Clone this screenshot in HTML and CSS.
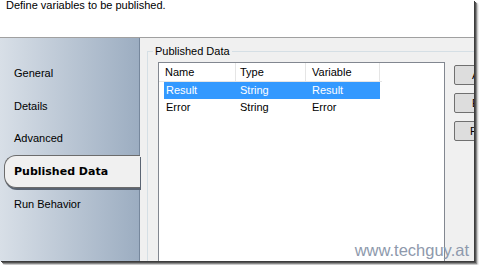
FILE: index.html
```html
<!DOCTYPE html>
<html lang="en">
<head>
  <meta charset="UTF-8" />
  <title>Published Data</title>
  <link rel="stylesheet" href="styles.css">
</head>
<body>
  <div class="frame">
    <div class="header">Define variables to be published.</div>
    <div class="main">
      <div class="sidebar">
        <div class="nav-item">General</div>
        <div class="nav-item">Details</div>
        <div class="nav-item">Advanced</div>
        <div class="nav-item active">Published Data</div>
        <div class="nav-item">Run Behavior</div>
      </div>
      <div class="content">
        <fieldset class="group">
          <legend>Published Data</legend>
          <div class="group-body">
            <div class="listview">
              <div class="lv-header">
                <div class="hcell c1">Name</div>
                <div class="hcell c2">Type</div>
                <div class="hcell c3">Variable</div>
              </div>
              <div class="lv-row selected">
                <div class="cell c1">Result</div>
                <div class="cell c2">String</div>
                <div class="cell c3">Result</div>
              </div>
              <div class="lv-row">
                <div class="cell c1">Error</div>
                <div class="cell c2">String</div>
                <div class="cell c3">Error</div>
              </div>
            </div>
            <div class="buttons">
              <button class="btn">Add...</button>
              <button class="btn">Edit...</button>
              <button class="btn wide">Remove</button>
            </div>
          </div>
        </fieldset>
      </div>
    </div>
    <div class="watermark">www.techguy.at</div>
  </div>
</body>
</html>
```

FILE: styles.css
```css
body {
  margin: 0;
  width: 479px;
  height: 265px;
  overflow: hidden;
  background: #fff;
  font-family: "Liberation Sans", Arial, sans-serif;
  font-size: 11px;
  color: #000;
}
.frame {
  position: relative;
  width: 474px;
  height: 261px;
  display: flex;
  flex-direction: column;
  overflow: hidden;
  box-shadow: 1px 1px 0 #3c3c3c, 2px 2px 0 #555, 3px 3px 1px #8a8a8a, 4px 4px 2px #c4c4c4;
}
.header {
  height: 37px;
  background: #fff;
  border-bottom: 1px solid #a0a0a0;
  padding: 0 6px;
  line-height: 11px;
}
.main {
  flex: 1;
  display: flex;
  min-height: 0;
}
.sidebar {
  width: 140px;
  flex-shrink: 0;
  box-sizing: border-box;
  background: linear-gradient(to right, #d8dfe7, #9cadc1);
  border-right: 1px solid #76879c;
  padding-top: 19px;
}
.nav-item {
  height: 32.5px;
  line-height: 32px;
  padding-left: 14px;
}
.nav-item.active {
  margin-left: 4px;
  margin-right: -1px;
  height: 31px;
  line-height: 31px;
  padding-left: 9px;
  background: #f0f0f0;
  border: 1px solid #6c6c6c;
  border-right: none;
  border-radius: 12px 0 0 12px;
  font-family: "DejaVu Sans", sans-serif;
  font-weight: bold;
  box-shadow: 1px 2px 0 #5a6472;
  position: relative;
}
.content {
  flex: 1;
  background: #f0f0f0;
  padding: 7px 0 0 7px;
  min-width: 0;
}
.group {
  margin: 0;
  padding: 0 0 0 10px;
  border: 1px solid #d5dfe5;
  border-right: none;
  border-bottom: none;
  height: 100%;
  box-sizing: border-box;
}
.group legend {
  padding: 0 2px;
  margin-left: -5px;
  line-height: 12px;
}
.group-body {
  display: flex;
  gap: 9px;
  padding-top: 5px;
  height: 100%;
}
.listview {
  width: 285px;
  flex-shrink: 0;
  background: #fff;
  border: 1px solid #828790;
  height: 220px;
}
.lv-header {
  display: flex;
  height: 18px;
  border-bottom: 1px solid #e5e5e5;
  margin-right: 62px;
}
.hcell {
  line-height: 18px;
  border-right: 1px solid #e5e5e5;
  padding-left: 6px;
  box-sizing: border-box;
}
.hcell.c1 { width: 77px; }
.hcell.c2 { width: 70px; padding-left: 4px; }
.hcell.c3 { width: 74px; }
.lv-row {
  display: flex;
  height: 17px;
  line-height: 17px;
  margin-left: 5px;
  width: 216px;
}
.lv-row.selected {
  background: #3399ff;
  color: #fff;
}
.cell {
  padding-left: 2px;
  box-sizing: border-box;
}
.cell.c1 { width: 72px; }
.cell.c2 { width: 70px; padding-left: 4px; }
.cell.c3 { width: 74px; padding-left: 6px; }
.buttons {
  display: flex;
  flex-direction: column;
  gap: 8px;
  padding-top: 3px;
}
.btn {
  width: 75px;
  height: 20px;
  background: #dddddd;
  border: 1px solid #707070;
  border-radius: 2px;
  font-family: inherit;
  font-size: 11px;
  text-align: left;
  padding: 0 0 0 17px;
  color: #000;
}
.btn.wide {
  padding-left: 15px;
}
.watermark {
  position: absolute;
  right: 5px;
  bottom: 1px;
  font-size: 16.5px;
  color: #8e99ac;
}
```
